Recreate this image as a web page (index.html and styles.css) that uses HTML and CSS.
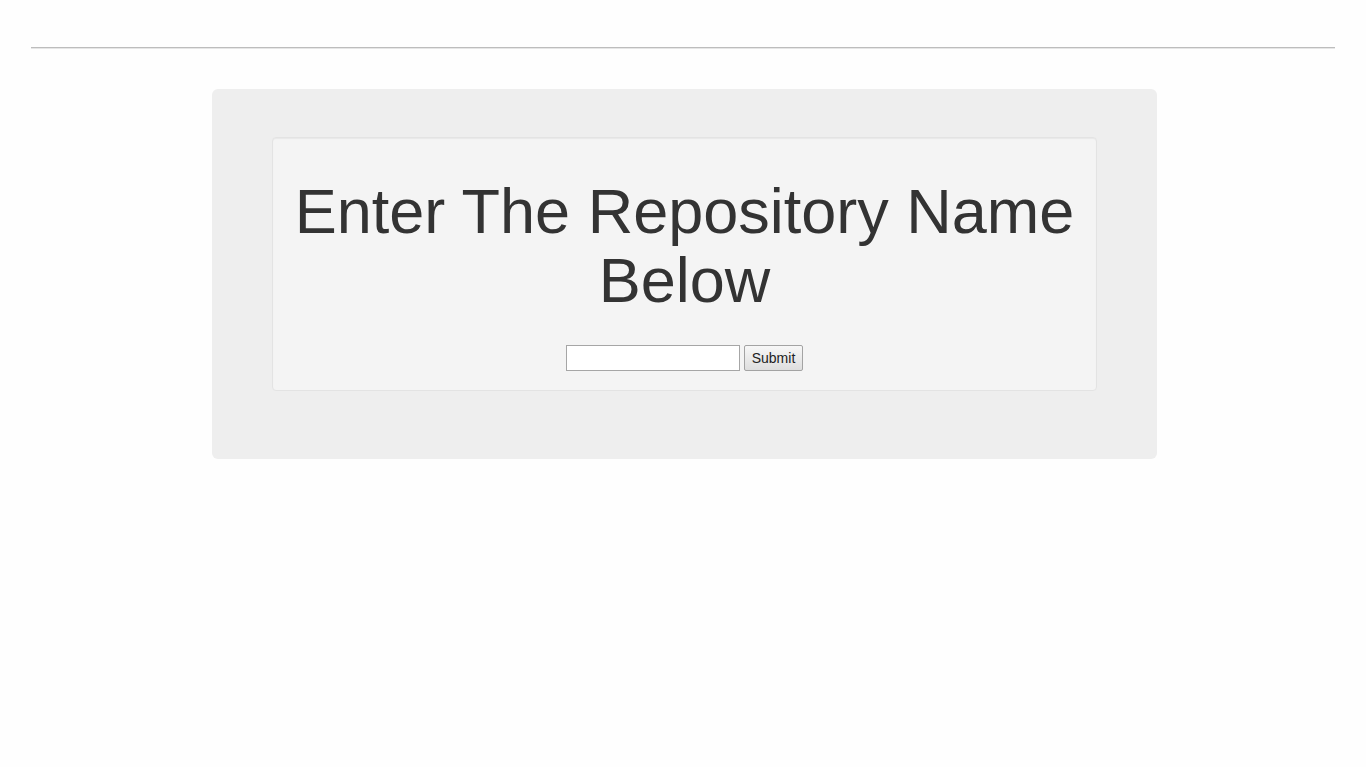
FILE: index.html
```html
<!DOCTYPE html>
<html>
<head>
<meta charset="utf-8">
<link rel="stylesheet" href="styles.css">
</head>
<body>
<div class="page">
  <hr class="rule">
  <div class="jumbotron">
    <div class="well">
      <h1 class="title">Enter The Repository Name Below</h1>
      <form class="repo-form">
        <input class="repo-input" type="text">
        <button class="repo-submit" type="button">Submit</button>
      </form>
    </div>
  </div>
</div>
</body>
</html>
```

FILE: styles.css
```css
html, body {
  margin: 0;
  padding: 0;
  background: #fefefe;
}
body {
  font-family: "Liberation Sans", Arial, sans-serif;
  color: #333;
  font-size: 14px;
}
.page {
  padding: 0 31px;
}
.rule {
  margin: 47px 0 40px;
  height: 0;
  border: 0;
  border-top: 1px solid #bdbdbd;
  border-bottom: 1px solid #e6e6e6;
}
.jumbotron {
  width: 945px;
  box-sizing: border-box;
  margin-left: 181px;
  background: #eeeeee;
  border-radius: 6px;
  padding: 48px 60px;
}
.well {
  background: #f4f4f4;
  border: 1px solid #e3e3e3;
  border-radius: 4px;
  box-shadow: inset 0 1px 1px rgba(0,0,0,0.05);
  padding: 19px;
  margin-bottom: 20px;
  text-align: center;
}
.title {
  margin: 20px 0 10px;
  font-size: 63px;
  line-height: 1.1;
  font-weight: 400;
  color: #333;
}
.repo-form {
  margin-top: 29px;
  display: flex;
  justify-content: center;
  gap: 4px;
}
.repo-input {
  box-sizing: border-box;
  width: 174px;
  height: 26px;
  margin: 0;
  border: 1px solid #a6a6a6;
  background: #fff;
  padding: 2px 3px;
}
.repo-submit {
  box-sizing: border-box;
  width: 59px;
  height: 26px;
  margin: 0;
  border: 1px solid #a3a3a3;
  border-radius: 2px;
  background: linear-gradient(#f7f7f7, #dedede);
  font-family: "Liberation Sans", Arial, sans-serif;
  font-size: 14px;
  color: #222;
  padding: 0;
}
```
